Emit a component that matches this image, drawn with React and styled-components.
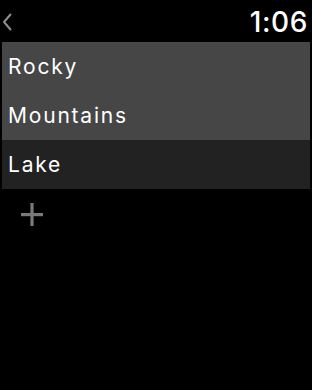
import React from "react";
import styled, { createGlobalStyle } from "styled-components";

const Global = createGlobalStyle`
  html, body { margin: 0; padding: 0; background: #000; }
  body { font-family: Inter, "Noto Sans", sans-serif; -webkit-font-smoothing: antialiased; }
`;

const Screen = styled.div`
  width: 312px;
  height: 390px;
  background: #000;
  display: flex;
  flex-direction: column;
  overflow: hidden;
`;

const Header = styled.div`
  height: 42px;
  display: flex;
  align-items: center;
  justify-content: space-between;
  padding: 0 4px 0 2px;
  box-sizing: border-box;
`;

const Back = styled.button`
  background: none;
  border: 0;
  padding: 0;
  width: 10px;
  height: 18px;
  display: flex;
  margin-top: 2px;
  svg { display: block; }
`;

const Time = styled.div`
  color: #fff;
  font-size: 28px;
  font-weight: 500;
  letter-spacing: 0.6px;
  line-height: 1;
  margin-top: 1px;
`;

const List = styled.div`
  margin: 0 2px;
  display: flex;
  flex-direction: column;
`;

const Row = styled.div`
  height: 49px;
  display: flex;
  align-items: center;
  padding-left: 6px;
  background: ${(p) => (p.$selected ? "#464646" : "#222222")};
  color: #fff;
  font-size: 21px;
  font-weight: 400;
  letter-spacing: 1.8px;
`;

const AddButton = styled.button`
  background: none;
  border: 0;
  padding: 0;
  margin: 14px 0 0 21px;
  width: 22px;
  height: 23px;
  display: flex;
  svg { display: block; }
`;

export default function App() {
  return (
    <>
      <Global />
      <Screen>
        <Header>
          <Back aria-label="Back">
            <svg width="10" height="18" viewBox="0 0 10 18">
              <path d="M8.5 1.5 L2 9 L8.5 16.5" fill="none" stroke="#8e8e93" strokeWidth="2" strokeLinecap="round" strokeLinejoin="round" />
            </svg>
          </Back>
          <Time>1:06</Time>
        </Header>
        <List>
          <Row $selected>Rocky</Row>
          <Row $selected>Mountains</Row>
          <Row>Lake</Row>
        </List>
        <AddButton aria-label="Add">
          <svg width="22" height="23" viewBox="0 0 22 23">
            <rect x="0" y="10" width="22" height="3.2" fill="#7a7a7a" />
            <rect x="9.4" y="0" width="3.2" height="23" fill="#7a7a7a" />
          </svg>
        </AddButton>
      </Screen>
    </>
  );
}
